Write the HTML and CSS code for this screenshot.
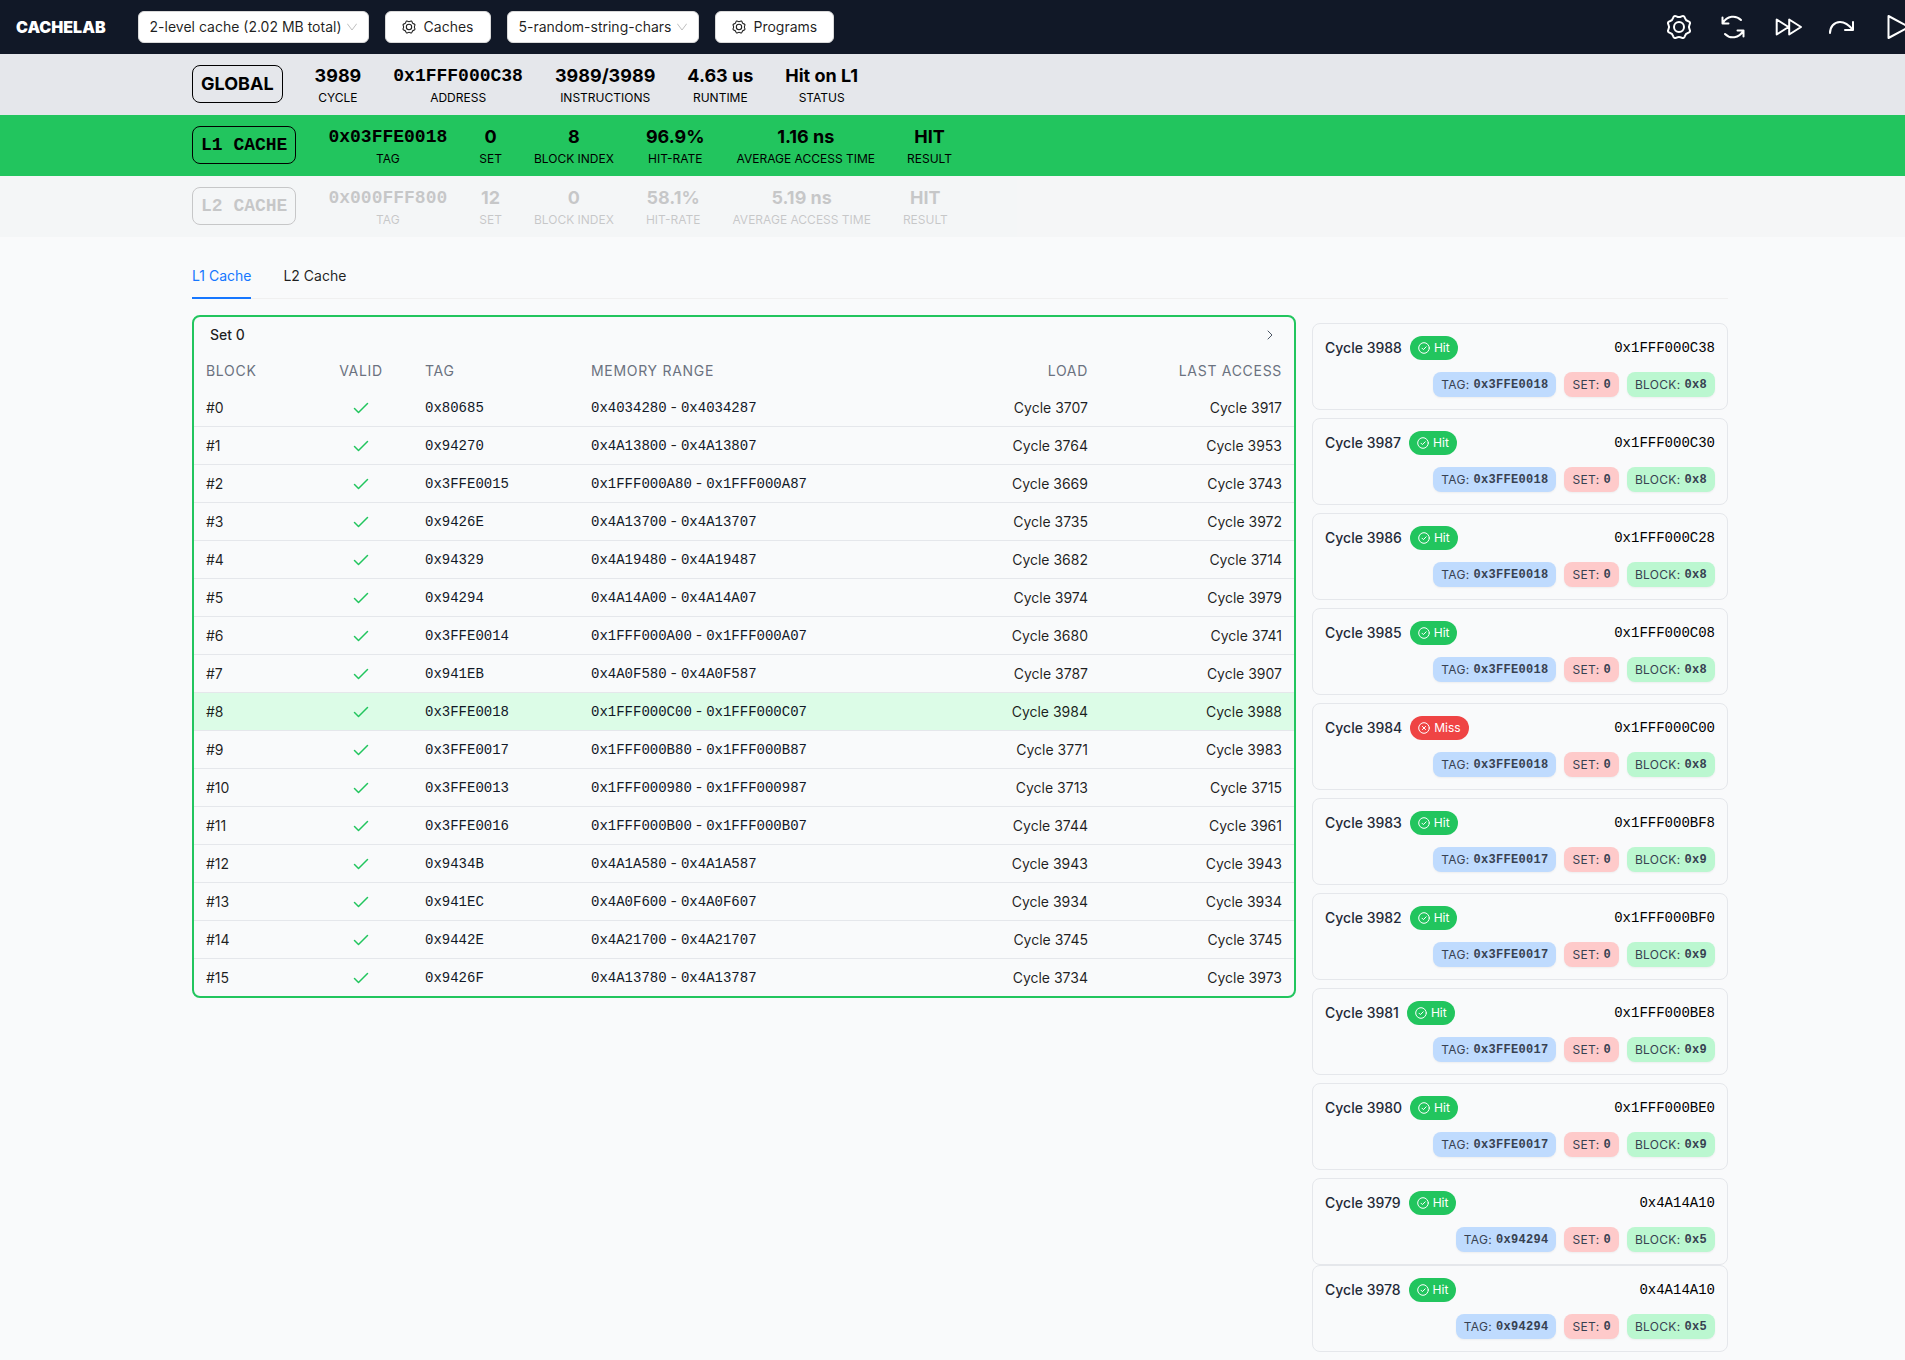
FILE: index.html
```html
<!DOCTYPE html>
<html lang="en">
<head>
<meta charset="utf-8">
<meta name="viewport" content="width=device-width, initial-scale=1">
<title>CacheLab</title>
<link rel="stylesheet" href="styles.css">
</head>
<body>
<svg class="sprite" aria-hidden="true">
  <symbol id="gear" viewBox="-13 -13 26 26"><path d="M10.6-2.5Q9.2 0 10.6 2.5Q12 5 9.2 5.8Q6.5 6.5 5.8 9.2Q5 12 2.5 10.6Q0 9.2-2.5 10.6Q-5 12-5.8 9.2Q-6.5 6.5-9.2 5.8Q-12 5-10.6 2.5Q-9.2 0-10.6-2.5Q-12-5-9.2-5.8Q-6.5-6.5-5.8-9.2Q-5-12-2.5-10.6Q0-9.2 2.5-10.6Q5-12 5.8-9.2Q6.5-6.5 9.2-5.8Q12-5 10.6-2.5Z"/><circle r="5"/></symbol>
  <symbol id="refresh" viewBox="0 0 26 26"><path d="M2.500 3.500v6h6M2.500 9.500C7 1.500 16 .8 21 6M23.500 22.500v-6h-6M23.500 16.500C19 24.500 10 25.200 5 20"/></symbol>
  <symbol id="forward" viewBox="0 0 28 26"><path d="M2.700 5.500v15L14.500 13ZM15.200 5.500v15L27 13Z"/></symbol>
  <symbol id="step" viewBox="0 0 26 26"><path d="M2 19C2 13 6 8 12 8C17 8 21 11 25 16M25 8v8h-8"/></symbol>
  <symbol id="play" viewBox="0 0 28 26"><path d="M6.500 2v22L27 13Z"/></symbol>
  <symbol id="tick" viewBox="0 0 16 12"><path d="M1.500 6.500L5.500 10.500L14.500 1.500"/></symbol>
  <symbol id="hit" viewBox="0 0 12 12"><circle cx="6" cy="6" r="5.300"/><path d="M4 6.200l1.400 1.400L8.200 4.800"/></symbol>
  <symbol id="miss" viewBox="0 0 12 12"><circle cx="6" cy="6" r="5.300"/><path d="M4.400 4.400l3.200 3.200M7.600 4.400l-3.200 3.200"/></symbol>
  <symbol id="down" viewBox="0 0 10 8"><path d="M.5 1L5 7L9.500 1"/></symbol>
</svg>
<div class="page">
  <header class="topbar">
    <h1 class="brand">CACHELAB</h1>
    <div class="controls">
      <div class="picker picker-cache"><select aria-label="Cache configuration"><option>2-level cache (2.02 MB total)</option></select><svg class="icon"><use href="#down"/></svg></div>
      <button type="button" class="btn"><svg class="icon"><use href="#gear"/></svg>Caches</button>
      <div class="picker picker-program"><select aria-label="Program"><option>5-random-string-chars</option></select><svg class="icon"><use href="#down"/></svg></div>
      <button type="button" class="btn"><svg class="icon"><use href="#gear"/></svg>Programs</button>
    </div>
    <div class="actions">
      <button type="button" aria-label="Settings"><svg class="icon"><use href="#gear"/></svg></button>
      <button type="button" aria-label="Reset"><svg class="icon"><use href="#refresh"/></svg></button>
      <button type="button" aria-label="Fast forward"><svg class="icon wide"><use href="#forward"/></svg></button>
      <button type="button" aria-label="Step"><svg class="icon"><use href="#step"/></svg></button>
      <button type="button" aria-label="Play"><svg class="icon wide"><use href="#play"/></svg></button>
    </div>
  </header>

  <section class="bar">
    <div class="container stats">
      <div class="bar-name">GLOBAL</div>
      <div class="stat"><b>3989</b><span>CYCLE</span></div>
      <div class="stat"><b class="mono">0x1FFF000C38</b><span>ADDRESS</span></div>
      <div class="stat"><b>3989/3989</b><span>INSTRUCTIONS</span></div>
      <div class="stat"><b>4.63 us</b><span>RUNTIME</span></div>
      <div class="stat"><b>Hit on L1</b><span>STATUS</span></div>
    </div>
  </section>
  <section class="bar bar-hit">
    <div class="container stats">
      <div class="bar-name mono">L1 CACHE</div>
      <div class="stat"><b class="mono">0x03FFE0018</b><span>TAG</span></div>
      <div class="stat"><b>0</b><span>SET</span></div>
      <div class="stat"><b>8</b><span>BLOCK INDEX</span></div>
      <div class="stat"><b>96.9%</b><span>HIT-RATE</span></div>
      <div class="stat"><b>1.16 ns</b><span>AVERAGE ACCESS TIME</span></div>
      <div class="stat"><b>HIT</b><span>RESULT</span></div>
    </div>
  </section>
  <section class="bar bar-idle">
    <div class="container stats">
      <div class="bar-name mono">L2 CACHE</div>
      <div class="stat"><b class="mono">0x000FFF800</b><span>TAG</span></div>
      <div class="stat"><b>12</b><span>SET</span></div>
      <div class="stat"><b>0</b><span>BLOCK INDEX</span></div>
      <div class="stat"><b>58.1%</b><span>HIT-RATE</span></div>
      <div class="stat"><b>5.19 ns</b><span>AVERAGE ACCESS TIME</span></div>
      <div class="stat"><b>HIT</b><span>RESULT</span></div>
    </div>
  </section>

  <main class="container main">
    <div class="tabs" role="tablist">
      <button type="button" role="tab" aria-selected="true">L1 Cache</button>
      <button type="button" role="tab" aria-selected="false">L2 Cache</button>
    </div>
    <div class="columns">
      <section class="panel">
        <button type="button" class="panel-head">Set 0<svg class="icon" viewBox="0 0 6 10"><path d="M1 1l4 4-4 4"/></svg></button>
        <table>
          <colgroup><col class="c-block"><col class="c-valid"><col class="c-tag"><col><col class="c-load"><col class="c-last"></colgroup>
          <thead><tr><th>BLOCK</th><th class="mid">VALID</th><th>TAG</th><th>MEMORY RANGE</th><th class="end">LOAD</th><th class="end">LAST ACCESS</th></tr></thead>
          <tbody>
            <tr><td>#0</td><td class="mid"><svg class="icon"><use href="#tick"/></svg></td><td><code>0x80685</code></td><td><code>0x4034280</code> - <code>0x4034287</code></td><td class="end">Cycle 3707</td><td class="end">Cycle 3917</td></tr>
            <tr><td>#1</td><td class="mid"><svg class="icon"><use href="#tick"/></svg></td><td><code>0x94270</code></td><td><code>0x4A13800</code> - <code>0x4A13807</code></td><td class="end">Cycle 3764</td><td class="end">Cycle 3953</td></tr>
            <tr><td>#2</td><td class="mid"><svg class="icon"><use href="#tick"/></svg></td><td><code>0x3FFE0015</code></td><td><code>0x1FFF000A80</code> - <code>0x1FFF000A87</code></td><td class="end">Cycle 3669</td><td class="end">Cycle 3743</td></tr>
            <tr><td>#3</td><td class="mid"><svg class="icon"><use href="#tick"/></svg></td><td><code>0x9426E</code></td><td><code>0x4A13700</code> - <code>0x4A13707</code></td><td class="end">Cycle 3735</td><td class="end">Cycle 3972</td></tr>
            <tr><td>#4</td><td class="mid"><svg class="icon"><use href="#tick"/></svg></td><td><code>0x94329</code></td><td><code>0x4A19480</code> - <code>0x4A19487</code></td><td class="end">Cycle 3682</td><td class="end">Cycle 3714</td></tr>
            <tr><td>#5</td><td class="mid"><svg class="icon"><use href="#tick"/></svg></td><td><code>0x94294</code></td><td><code>0x4A14A00</code> - <code>0x4A14A07</code></td><td class="end">Cycle 3974</td><td class="end">Cycle 3979</td></tr>
            <tr><td>#6</td><td class="mid"><svg class="icon"><use href="#tick"/></svg></td><td><code>0x3FFE0014</code></td><td><code>0x1FFF000A00</code> - <code>0x1FFF000A07</code></td><td class="end">Cycle 3680</td><td class="end">Cycle 3741</td></tr>
            <tr><td>#7</td><td class="mid"><svg class="icon"><use href="#tick"/></svg></td><td><code>0x941EB</code></td><td><code>0x4A0F580</code> - <code>0x4A0F587</code></td><td class="end">Cycle 3787</td><td class="end">Cycle 3907</td></tr>
            <tr class="current"><td>#8</td><td class="mid"><svg class="icon"><use href="#tick"/></svg></td><td><code>0x3FFE0018</code></td><td><code>0x1FFF000C00</code> - <code>0x1FFF000C07</code></td><td class="end">Cycle 3984</td><td class="end">Cycle 3988</td></tr>
            <tr><td>#9</td><td class="mid"><svg class="icon"><use href="#tick"/></svg></td><td><code>0x3FFE0017</code></td><td><code>0x1FFF000B80</code> - <code>0x1FFF000B87</code></td><td class="end">Cycle 3771</td><td class="end">Cycle 3983</td></tr>
            <tr><td>#10</td><td class="mid"><svg class="icon"><use href="#tick"/></svg></td><td><code>0x3FFE0013</code></td><td><code>0x1FFF000980</code> - <code>0x1FFF000987</code></td><td class="end">Cycle 3713</td><td class="end">Cycle 3715</td></tr>
            <tr><td>#11</td><td class="mid"><svg class="icon"><use href="#tick"/></svg></td><td><code>0x3FFE0016</code></td><td><code>0x1FFF000B00</code> - <code>0x1FFF000B07</code></td><td class="end">Cycle 3744</td><td class="end">Cycle 3961</td></tr>
            <tr><td>#12</td><td class="mid"><svg class="icon"><use href="#tick"/></svg></td><td><code>0x9434B</code></td><td><code>0x4A1A580</code> - <code>0x4A1A587</code></td><td class="end">Cycle 3943</td><td class="end">Cycle 3943</td></tr>
            <tr><td>#13</td><td class="mid"><svg class="icon"><use href="#tick"/></svg></td><td><code>0x941EC</code></td><td><code>0x4A0F600</code> - <code>0x4A0F607</code></td><td class="end">Cycle 3934</td><td class="end">Cycle 3934</td></tr>
            <tr><td>#14</td><td class="mid"><svg class="icon"><use href="#tick"/></svg></td><td><code>0x9442E</code></td><td><code>0x4A21700</code> - <code>0x4A21707</code></td><td class="end">Cycle 3745</td><td class="end">Cycle 3745</td></tr>
            <tr><td>#15</td><td class="mid"><svg class="icon"><use href="#tick"/></svg></td><td><code>0x9426F</code></td><td><code>0x4A13780</code> - <code>0x4A13787</code></td><td class="end">Cycle 3734</td><td class="end">Cycle 3973</td></tr>
          </tbody>
        </table>
      </section>
      <aside class="history">
        <article class="entry"><div class="entry-top">Cycle 3988<span class="badge"><svg class="icon"><use href="#hit"/></svg>Hit</span><code>0x1FFF000C38</code></div><div class="chips"><span class="chip tag">TAG: <code>0x3FFE0018</code></span><span class="chip set">SET: <code>0</code></span><span class="chip block">BLOCK: <code>0x8</code></span></div></article>
        <article class="entry"><div class="entry-top">Cycle 3987<span class="badge"><svg class="icon"><use href="#hit"/></svg>Hit</span><code>0x1FFF000C30</code></div><div class="chips"><span class="chip tag">TAG: <code>0x3FFE0018</code></span><span class="chip set">SET: <code>0</code></span><span class="chip block">BLOCK: <code>0x8</code></span></div></article>
        <article class="entry"><div class="entry-top">Cycle 3986<span class="badge"><svg class="icon"><use href="#hit"/></svg>Hit</span><code>0x1FFF000C28</code></div><div class="chips"><span class="chip tag">TAG: <code>0x3FFE0018</code></span><span class="chip set">SET: <code>0</code></span><span class="chip block">BLOCK: <code>0x8</code></span></div></article>
        <article class="entry"><div class="entry-top">Cycle 3985<span class="badge"><svg class="icon"><use href="#hit"/></svg>Hit</span><code>0x1FFF000C08</code></div><div class="chips"><span class="chip tag">TAG: <code>0x3FFE0018</code></span><span class="chip set">SET: <code>0</code></span><span class="chip block">BLOCK: <code>0x8</code></span></div></article>
        <article class="entry"><div class="entry-top">Cycle 3984<span class="badge miss"><svg class="icon"><use href="#miss"/></svg>Miss</span><code>0x1FFF000C00</code></div><div class="chips"><span class="chip tag">TAG: <code>0x3FFE0018</code></span><span class="chip set">SET: <code>0</code></span><span class="chip block">BLOCK: <code>0x8</code></span></div></article>
        <article class="entry"><div class="entry-top">Cycle 3983<span class="badge"><svg class="icon"><use href="#hit"/></svg>Hit</span><code>0x1FFF000BF8</code></div><div class="chips"><span class="chip tag">TAG: <code>0x3FFE0017</code></span><span class="chip set">SET: <code>0</code></span><span class="chip block">BLOCK: <code>0x9</code></span></div></article>
        <article class="entry"><div class="entry-top">Cycle 3982<span class="badge"><svg class="icon"><use href="#hit"/></svg>Hit</span><code>0x1FFF000BF0</code></div><div class="chips"><span class="chip tag">TAG: <code>0x3FFE0017</code></span><span class="chip set">SET: <code>0</code></span><span class="chip block">BLOCK: <code>0x9</code></span></div></article>
        <article class="entry"><div class="entry-top">Cycle 3981<span class="badge"><svg class="icon"><use href="#hit"/></svg>Hit</span><code>0x1FFF000BE8</code></div><div class="chips"><span class="chip tag">TAG: <code>0x3FFE0017</code></span><span class="chip set">SET: <code>0</code></span><span class="chip block">BLOCK: <code>0x9</code></span></div></article>
        <article class="entry"><div class="entry-top">Cycle 3980<span class="badge"><svg class="icon"><use href="#hit"/></svg>Hit</span><code>0x1FFF000BE0</code></div><div class="chips"><span class="chip tag">TAG: <code>0x3FFE0017</code></span><span class="chip set">SET: <code>0</code></span><span class="chip block">BLOCK: <code>0x9</code></span></div></article>
        <article class="entry"><div class="entry-top">Cycle 3979<span class="badge"><svg class="icon"><use href="#hit"/></svg>Hit</span><code>0x4A14A10</code></div><div class="chips"><span class="chip tag">TAG: <code>0x94294</code></span><span class="chip set">SET: <code>0</code></span><span class="chip block">BLOCK: <code>0x5</code></span></div></article>
        <article class="entry leaving"><div class="entry-top">Cycle 3978<span class="badge"><svg class="icon"><use href="#hit"/></svg>Hit</span><code>0x4A14A10</code></div><div class="chips"><span class="chip tag">TAG: <code>0x94294</code></span><span class="chip set">SET: <code>0</code></span><span class="chip block">BLOCK: <code>0x5</code></span></div></article>
      </aside>
    </div>
  </main>
</div>
</body>
</html>
```
FILE: styles.css
```css
*, *::before, *::after { box-sizing: border-box; }
html { overflow: hidden auto; scrollbar-width: none; background: #f9fafb; }
body {
  margin: 0;
  font: 14px/22px Inter, "Liberation Sans", sans-serif;
  color: rgba(0, 0, 0, 0.88);
}
button, select { font: inherit; color: inherit; }
button { border: 0; padding: 0; background: none; cursor: pointer; }
code, .mono { font-family: "Liberation Mono", monospace; }
code { font-size: 14px; color: #000; }

.sprite { display: none; }
.icon { fill: none; stroke: currentColor; stroke-width: 2; stroke-linecap: round; stroke-linejoin: round; flex: none; }

.page { width: calc(100% + 15px); }
.container { max-width: 1536px; margin: 0 auto; }

.topbar {
  display: flex;
  align-items: center;
  gap: 32px;
  height: 54px;
  padding: 0 12px 0 16px;
  background: #111827;
  color: #fff;
}
.brand { margin: 0; font-size: 16px; line-height: 24px; font-weight: 900; }
.controls { display: flex; gap: 16px; color: rgba(0, 0, 0, 0.88); }
.picker { display: flex; align-items: center; height: 32px; padding-right: 11px; background: #fff; border: 1px solid #d9d9d9; border-radius: 6px; }
.picker-cache { width: 231px; }
.picker-program { width: 192px; }
.picker select { appearance: none; flex: 1; min-width: 0; height: 30px; padding: 0 0 0 11px; border: 0; background: none; }
.picker .icon { width: 10px; height: 8px; color: #bfbfbf; stroke-width: 1; }
.btn { display: flex; align-items: center; gap: 8px; height: 32px; padding: 0 16px; background: #fff; border: 1px solid #d9d9d9; border-radius: 6px; }
.btn .icon { width: 14px; height: 14px; }
.actions { display: flex; align-items: center; gap: 28px; margin-left: auto; }
.actions button { display: flex; width: 26px; }
.actions .icon { width: 26px; height: 26px; stroke-width: 2; }
.actions .wide { width: 28px; }

.bar { padding: 8px 0 9px; background: #e5e7eb; color: #000; }
.bar-hit { background: #22c55e; }
.bar-idle { opacity: 0.2; }
.stats { display: flex; align-items: center; gap: 32px; }
.bar-name { padding: 4px 8px; border: 1px solid #000; border-radius: 8px; font-size: 18px; line-height: 28px; font-weight: 700; }
.stat { display: flex; flex-direction: column; align-items: center; }
.stat b { font-size: 18px; line-height: 28px; font-weight: 700; }
.stat span { font-size: 12px; line-height: 16px; }

.main { padding-top: 16px; }
.tabs { display: flex; gap: 32px; margin-bottom: 16px; box-shadow: inset 0 -1px #f0f0f0; }
.tabs button { padding: 12px 0; }
.tabs [aria-selected="true"] { color: #1677ff; box-shadow: inset 0 -2px #1677ff; }

.columns { display: flex; align-items: flex-start; gap: 16px; }
.panel { flex: 1; min-width: 0; border: 2px solid #22c55e; border-radius: 8px; overflow: hidden; }
.panel-head { display: flex; align-items: center; justify-content: space-between; width: 100%; height: 36px; padding: 0 21px 0 16px; font-weight: 500; }
.panel-head .icon { width: 6px; height: 10px; color: #4b5563; stroke-width: 1; }
table { width: 100%; table-layout: fixed; border-collapse: separate; border-spacing: 0; }
.c-block { width: 115px; }
.c-valid { width: 104px; }
.c-tag { width: 166px; }
.c-load { width: 170px; }
.c-last { width: 194px; }
th { height: 36px; padding: 0 12px; text-align: left; font-weight: 400; letter-spacing: 0.05em; color: #6b7280; }
td { height: 38px; padding: 0 12px; border-bottom: 1px solid #e5e7eb; }
tr:last-child td { height: 37px; border-bottom: 0; }
.mid { text-align: center; }
.end { text-align: right; }
.current { background: #dcfce7; }
td .icon { display: block; width: 16px; height: 12px; margin: 0 auto; color: #22c55e; stroke-width: 1.5; }
td code { color: #111827; }

.history { width: 416px; padding-top: 8px; }
.entry { margin-bottom: 8px; padding: 12px; border: 1px solid #e5e7eb; border-radius: 8px; }
.entry:has(+ .leaving) { margin-bottom: 0; }
.entry-top { display: flex; align-items: center; gap: 8px; font-weight: 500; color: #1f2937; }
.entry-top > code { margin-left: auto; font-weight: 400; }
.badge { display: flex; align-items: center; gap: 4px; height: 24px; padding: 0 8px; border-radius: 12px; background: #22c55e; color: #fff; font-size: 12px; font-weight: 400; }
.badge.miss { background: #ef4444; }
.badge .icon { width: 12px; height: 12px; stroke-width: 1; }
.chips { display: flex; justify-content: flex-end; gap: 8px; margin-top: 12px; }
.chip { display: flex; align-items: center; gap: 4px; height: 25px; padding: 0 8px; border-radius: 8px; box-shadow: 0 1px 2px rgba(0, 0, 0, 0.05); font-size: 12px; letter-spacing: 0.025em; color: #374151; }
.chip code { font-size: 12px; font-weight: 700; color: inherit; }
.tag { background: #bfdbfe; }
.set { background: #fecaca; }
.block { background: #bbf7d0; }
```
